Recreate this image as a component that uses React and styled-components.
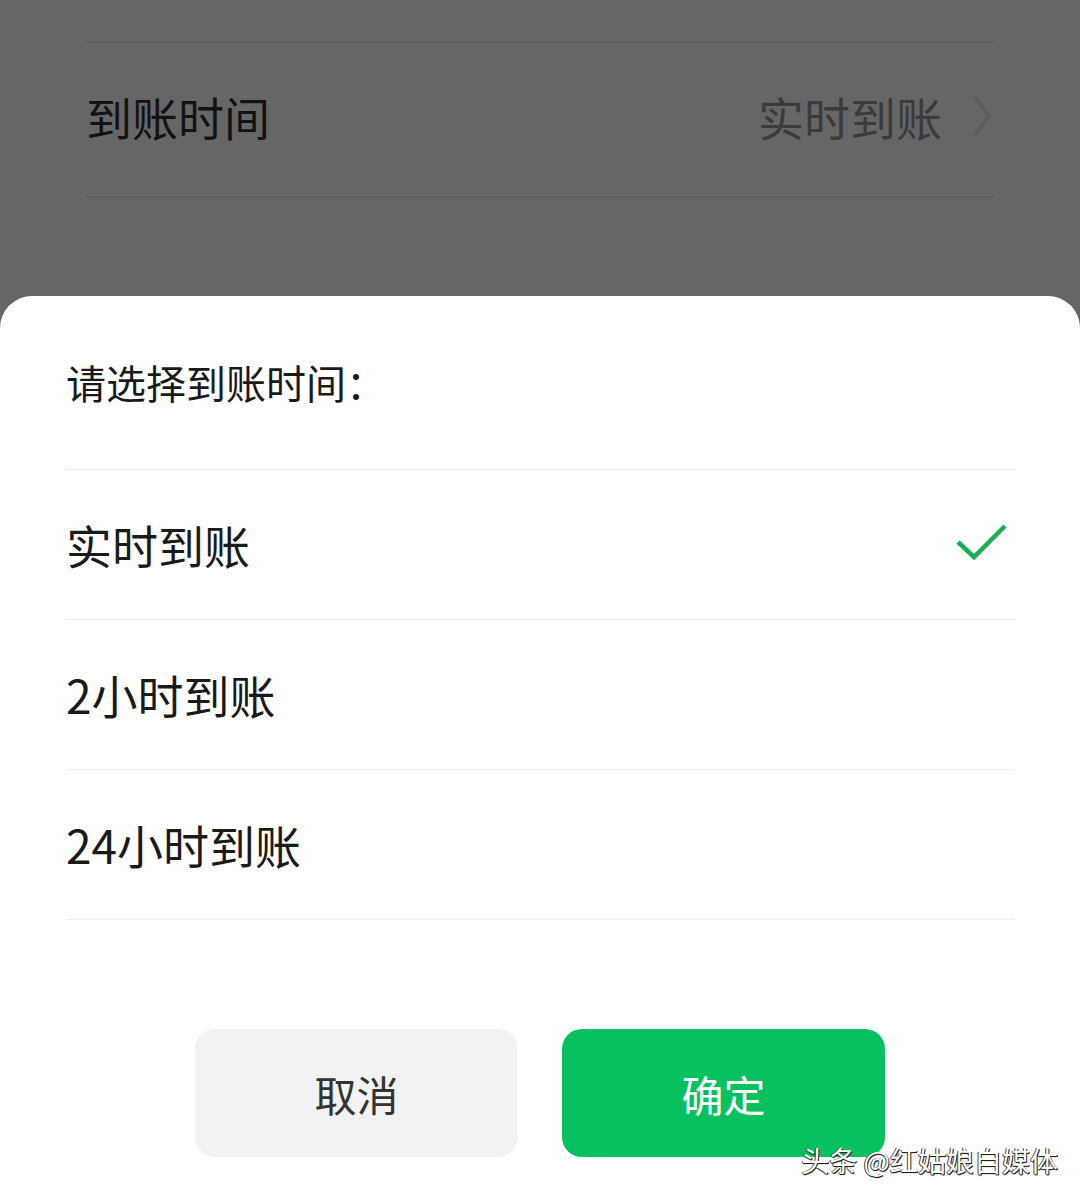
import React from 'react'
import styled, { createGlobalStyle } from 'styled-components'

const GlobalStyle = createGlobalStyle`
  html, body {
    margin: 0;
    padding: 0;
    background: #666666;
  }
  body {
    font-family: "Noto Sans CJK SC", "Noto Sans", sans-serif;
  }
`

const Screen = styled.div`
  position: relative;
  width: 1080px;
  height: 1200px;
  background: #666666;
  overflow: hidden;
  display: flex;
  flex-direction: column;
`

const Behind = styled.div`
  height: 296px;
  padding: 41px 86px 0 86px;
  box-sizing: border-box;
`

const BehindRow = styled.div`
  height: 157px;
  box-sizing: border-box;
  border-top: 2px solid #5f5f5f;
  border-bottom: 2px solid #5f5f5f;
  padding-bottom: 8px;
  display: flex;
  align-items: center;
  justify-content: space-between;
`

const BehindLabel = styled.span`
  font-size: 46px;
  color: #121212;
  line-height: 1;
`

const BehindValue = styled.span`
  display: flex;
  align-items: center;
  gap: 30px;
  font-size: 46px;
  color: #3b3b3b;
  line-height: 1;
  margin-right: 2px;
`

const Sheet = styled.div`
  flex: 1;
  background: #ffffff;
  border-radius: 32px 32px 0 0;
  padding: 0 65px 0 66px;
  display: flex;
  flex-direction: column;
`

const Title = styled.div`
  height: 174px;
  box-sizing: border-box;
  border-bottom: 1px solid #ececec;
  display: flex;
  align-items: center;
  font-size: 40px;
  color: #1a1a1a;
  padding-bottom: 2px;
`

const Option = styled.div`
  height: 150px;
  box-sizing: border-box;
  border-bottom: 1px solid #ececec;
  display: flex;
  align-items: center;
  justify-content: space-between;
  font-size: 46px;
  color: #1a1a1a;
  padding-bottom: 1px;
`

const Actions = styled.div`
  display: flex;
  justify-content: center;
  gap: 44px;
  margin-top: 109px;
  margin-left: -1px;
`

const Button = styled.div`
  width: 323px;
  height: 128px;
  border-radius: 20px;
  display: flex;
  align-items: center;
  justify-content: center;
  font-size: 42px;
  background: ${p => (p.$primary ? '#07c160' : '#f2f2f2')};
  color: ${p => (p.$primary ? '#ffffff' : '#333333')};
`

const Watermark = styled.div`
  position: absolute;
  right: 22px;
  bottom: 20px;
  font-size: 28px;
  color: #ffffff;
  text-shadow: 1px 1px 0 #222, -1px 0 0 #444, 0 1px 1px #000;
`

const Chevron = () => (
  <svg width="20" height="44" viewBox="0 0 20 44">
    <path d="M3 3 L17 22 L3 41" fill="none" stroke="#5c5c5c" strokeWidth="3" />
  </svg>
)

const Check = () => (
  <svg width="56" height="44" viewBox="0 0 56 44" style={{ marginRight: 4 }}>
    <path d="M3 20 L19 35 L50 4" fill="none" stroke="#1aad5a" strokeWidth="4.5" />
  </svg>
)

const options = ['实时到账', '2小时到账', '24小时到账']

export default function App() {
  return (
    <Screen>
      <GlobalStyle />
      <Behind>
        <BehindRow>
          <BehindLabel>到账时间</BehindLabel>
          <BehindValue>
            实时到账
            <Chevron />
          </BehindValue>
        </BehindRow>
      </Behind>
      <Sheet>
        <Title>请选择到账时间：</Title>
        {options.map((o, i) => (
          <Option key={o}>
            <span>{o}</span>
            {i === 0 && <Check />}
          </Option>
        ))}
        <Actions>
          <Button>取消</Button>
          <Button $primary>确定</Button>
        </Actions>
      </Sheet>
      <Watermark>头条 @红姑娘自媒体</Watermark>
    </Screen>
  )
}
